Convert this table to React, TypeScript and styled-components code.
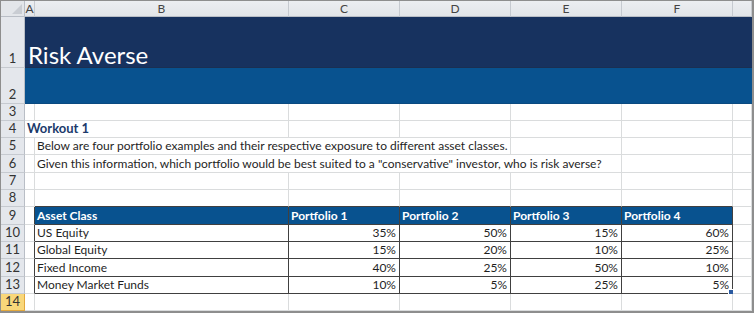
import React from "react";
import styled, { createGlobalStyle } from "styled-components";

const Global = createGlobalStyle`
  html, body { margin: 0; padding: 0; background: #ffffff; }
  body { font-family: Lato, "Open Sans", sans-serif; }
`;

const GRID = "#dadcdd";
const DARK = "#404040";
const NAVY = "#17325f";
const BLUE = "#08528f";

const Frame = styled.div`
  width: 754px;
  box-sizing: border-box;
  border-top: 1px solid #8e8e8e;
  border-left: 1px solid #8e8e8e;
  border-right: 2px solid #8e8e8e;
  border-bottom: 2px solid #8e8e8e;
`;

const Sheet = styled.div`
  display: grid;
  grid-template-columns: 24px 10px 254px 111px 111px 111px 111px 1fr;
  grid-template-rows: 16px 51px 36px 17px 17px 17px 18px 17px 17px 18px 17px 17px 18px 17px 17px;
  font-family: Lato, "Open Sans", sans-serif;
  font-size: 12px;
  color: #222;
`;

const Corner = styled.div`
  position: relative;
  background: #e3e6ea;
  border-right: 1px solid #b9bec6;
  border-bottom: 1px solid #b9bec6;
  box-sizing: border-box;
  &::after {
    content: "";
    position: absolute;
    right: 2px;
    bottom: 2px;
    width: 0;
    height: 0;
    border-left: 10px solid transparent;
    border-bottom: 10px solid #c9cdd3;
  }
`;

const ColHead = styled.div`
  background: linear-gradient(#eceef1, #e2e5e9);
  border-right: 1px solid #c6cad0;
  border-bottom: 1px solid #b9bec6;
  box-sizing: border-box;
  display: flex;
  align-items: center;
  justify-content: center;
  font-size: 12px;
  color: #444;
  line-height: 1;
`;

const RowHead = styled.div<{ $selected?: boolean }>`
  background: ${(p) => (p.$selected ? "#f9d77a" : "#e4e7ec")};
  border-right: 1px solid ${(p) => (p.$selected ? "#e2a83c" : "#b9bec6")};
  border-bottom: 1px solid ${(p) => (p.$selected ? "#e2a83c" : "#c6cad0")};
  box-sizing: border-box;
  display: flex;
  align-items: flex-end;
  justify-content: center;
  padding-bottom: 2px;
  font-size: 13px;
  color: #333;
  line-height: 1;
`;

const Band = styled.div<{ $tone: "navy" | "blue" }>`
  grid-column: 2 / -1;
  background: ${(p) => (p.$tone === "navy" ? NAVY : BLUE)};
  border-bottom: 1px solid ${(p) => (p.$tone === "navy" ? "#1a2f52" : "#0a4a80")};
  box-sizing: border-box;
  display: flex;
  align-items: flex-end;
  padding: 0 0 0 3px;
`;

const Title = styled.span`
  color: #ffffff;
  font-family: Lato, "Open Sans", sans-serif;
  font-size: 24px;
  font-weight: 400;
  line-height: 1;
`;

type Tone = "plain" | "head" | "data";

const Cell = styled.div<{
  $span?: number;
  $align?: "left" | "right";
  $tone?: Tone;
  $darkRight?: boolean;
  $darkBottom?: boolean;
  $bold?: boolean;
  $navy?: boolean;
}>`
  position: relative;
  grid-column: span ${(p) => p.$span ?? 1};
  box-sizing: border-box;
  background: ${(p) => (p.$tone === "head" ? BLUE : "transparent")};
  border-right: 1px solid ${(p) => (p.$darkRight || p.$tone === "head" || p.$tone === "data" ? DARK : GRID)};
  border-bottom: 1px solid ${(p) => (p.$darkBottom || p.$tone === "head" || p.$tone === "data" ? DARK : GRID)};
  display: flex;
  align-items: flex-end;
  justify-content: ${(p) => (p.$align === "right" ? "flex-end" : "flex-start")};
  padding: 0 3px 1px 2px;
  white-space: nowrap;
  overflow: visible;
  line-height: 1.25;
  font-weight: ${(p) => (p.$bold || p.$tone === "head" ? 700 : 400)};
  color: ${(p) => (p.$tone === "head" ? "#ffffff" : p.$navy ? "#1b3a6b" : "#1f1f1f")};
  font-size: ${(p) => (p.$navy ? "13px" : "12px")};
`;

const FillHandle = styled.span`
  position: absolute;
  right: -2px;
  bottom: -2px;
  width: 4px;
  height: 4px;
  background: #2a5aa0;
  border: 1px solid #ffffff;
  box-sizing: content-box;
`;

const letters = ["A", "B", "C", "D", "E", "F", ""];

const tableRows: [string, string, string, string, string][] = [
  ["US Equity", "35%", "50%", "15%", "60%"],
  ["Global Equity", "15%", "20%", "10%", "25%"],
  ["Fixed Income", "40%", "25%", "50%", "10%"],
  ["Money Market Funds", "10%", "5%", "25%", "5%"],
];

const Empty: React.FC<{ n: number; darkBottomFrom?: number; darkBottomTo?: number }> = ({
  n,
  darkBottomFrom,
  darkBottomTo,
}) => (
  <>
    {Array.from({ length: n }).map((_, i) => (
      <Cell
        key={i}
        $darkBottom={darkBottomFrom !== undefined && darkBottomTo !== undefined && i >= darkBottomFrom && i <= darkBottomTo}
      />
    ))}
  </>
);

export default function App() {
  return (
    <>
      <Global />
      <Frame>
        <Sheet>
          <Corner />
          {letters.map((l, i) => (
            <ColHead key={i}>{l}</ColHead>
          ))}

          <RowHead>1</RowHead>
          <Band $tone="navy">
            <Title>Risk Averse</Title>
          </Band>

          <RowHead>2</RowHead>
          <Band $tone="blue" />

          <RowHead>3</RowHead>
          <Empty n={7} />

          <RowHead>4</RowHead>
          <Cell $span={2} $bold $navy>
            Workout 1
          </Cell>
          <Empty n={5} />

          <RowHead>5</RowHead>
          <Cell />
          <Cell $span={3}>
            Below are four portfolio examples and their respective exposure to different asset classes.
          </Cell>
          <Empty n={3} />

          <RowHead>6</RowHead>
          <Cell />
          <Cell $span={4}>
            Given this information, which portfolio would be best suited to a "conservative" investor, who is risk averse?
          </Cell>
          <Empty n={2} />

          <RowHead>7</RowHead>
          <Empty n={7} />

          <RowHead>8</RowHead>
          <Empty n={7} darkBottomFrom={1} darkBottomTo={5} />

          <RowHead>9</RowHead>
          <Cell $darkRight />
          {["Asset Class", "Portfolio 1", "Portfolio 2", "Portfolio 3", "Portfolio 4"].map((h) => (
            <Cell key={h} $tone="head">
              {h}
            </Cell>
          ))}
          <Cell />

          {tableRows.map((r, ri) => (
            <React.Fragment key={r[0]}>
              <RowHead>{10 + ri}</RowHead>
              <Cell $darkRight />
              <Cell $tone="data">{r[0]}</Cell>
              {r.slice(1).map((v, vi) => (
                <Cell key={vi} $tone="data" $align="right">
                  {v}
                  {ri === tableRows.length - 1 && vi === 3 && <FillHandle />}
                </Cell>
              ))}
              <Cell />
            </React.Fragment>
          ))}

          <RowHead $selected>14</RowHead>
          <Empty n={7} />
        </Sheet>
      </Frame>
    </>
  );
}
